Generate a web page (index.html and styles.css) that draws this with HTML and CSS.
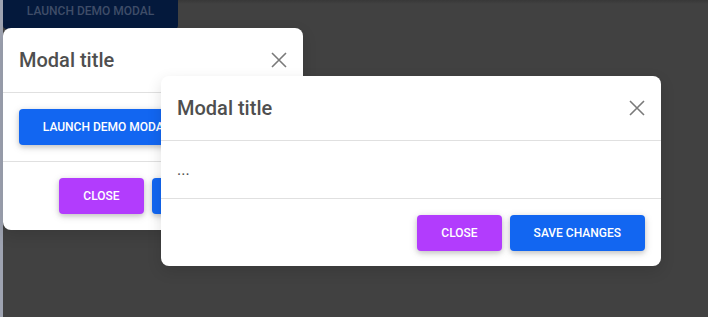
FILE: index.html
```html
<!DOCTYPE html>
<html>
<head>
<meta charset="utf-8">
<link rel="stylesheet" href="styles.css">
</head>
<body>
<div class="page">
  <div class="strip"></div>
  <div class="content">
    <button class="btn btn-primary btn-dim">Launch demo modal</button>
  </div>

  <div class="modal modal-sm">
    <div class="modal-header">
      <h5 class="modal-title">Modal title</h5>
      <svg class="close" viewBox="0 0 16 16" width="16" height="16"><path d="M1 1L15 15M15 1L1 15" stroke="#7a7a7a" stroke-width="1.6" fill="none"/></svg>
    </div>
    <div class="modal-body">
      <button class="btn btn-primary">Launch demo modal</button>
    </div>
    <div class="modal-footer">
      <button class="btn btn-secondary">Close</button>
      <button class="btn btn-primary">Save changes</button>
    </div>
  </div>

  <div class="modal modal-lg">
    <div class="modal-header">
      <h5 class="modal-title">Modal title</h5>
      <svg class="close" viewBox="0 0 16 16" width="16" height="16"><path d="M1 1L15 15M15 1L1 15" stroke="#7a7a7a" stroke-width="1.6" fill="none"/></svg>
    </div>
    <div class="modal-body"><p class="dots">...</p></div>
    <div class="modal-footer">
      <button class="btn btn-secondary">Close</button>
      <button class="btn btn-primary">Save changes</button>
    </div>
  </div>
</div>
</body>
</html>
```

FILE: styles.css
```css
html, body {
  margin: 0;
  padding: 0;
  height: 100%;
}
body {
  background: #414141;
  font-family: Roboto, "Liberation Sans", sans-serif;
  overflow: hidden;
}
.page {
  position: relative;
  display: flex;
  height: 317px;
}
.strip {
  width: 3px;
  background: #9ea3b1;
  flex: none;
}
.content {
  flex: 1;
  background: linear-gradient(#383838 0, #414141 4px);
}
.btn {
  display: inline-flex;
  align-items: center;
  justify-content: center;
  height: 36px;
  padding: 0 24px;
  border: 0;
  border-radius: 4px;
  font-family: Roboto, "Liberation Sans", sans-serif;
  font-size: 12px;
  font-weight: 500;
  text-transform: uppercase;
  color: #fff;
  box-shadow: 0 2px 5px 0 rgba(0,0,0,.16), 0 2px 10px 0 rgba(0,0,0,.12);
  white-space: nowrap;
  line-height: 1;
}
.btn-primary { background: #1266f1; }
.btn-secondary { background: #b23cfd; }
.btn-dim {
  background: #04193c;
  color: #3f4d68;
  box-shadow: none;
  width: 175px;
  margin-top: -8px;
  border-radius: 0 0 4px 4px;
}
.modal {
  position: absolute;
  background: #fff;
  border-radius: 8px;
  overflow: hidden;
  box-shadow: 0 5px 15px rgba(0,0,0,.12);
}
.modal-sm {
  left: 3px;
  top: 28px;
  width: 300px;
}
.modal-lg {
  left: 161px;
  top: 76px;
  width: 500px;
  z-index: 2;
}
.modal-header {
  display: flex;
  align-items: center;
  justify-content: space-between;
  height: 32px;
  padding: 16px;
  border-bottom: 1px solid #e0e0e0;
}
.modal-title {
  margin: 0;
  font-size: 20px;
  font-weight: 500;
  color: #4f4f4f;
  line-height: 32px;
}
.modal-body {
  padding: 16px;
  border-bottom: 1px solid #e0e0e0;
}
.modal-sm .modal-body .btn { width: 175px; }
.dots {
  margin: 0;
  font-size: 16px;
  line-height: 25px;
  color: #4f4f4f;
}
.modal-footer {
  display: flex;
  justify-content: flex-end;
  gap: 8px;
  padding: 16px;
}
.modal-lg .modal-footer { padding-bottom: 15px; }
```
